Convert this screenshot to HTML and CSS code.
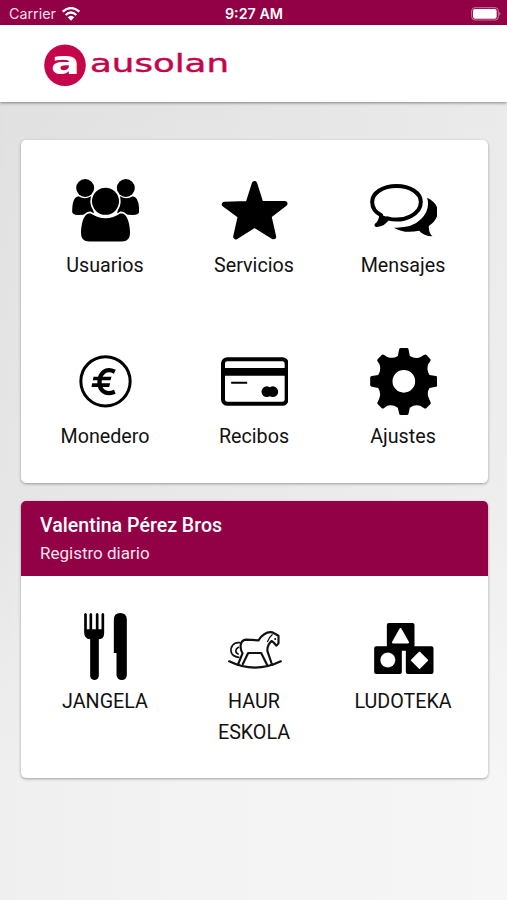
FILE: index.html
```html
<!DOCTYPE html>
<html lang="es">
<head>
<meta charset="utf-8">
<title>Ausolan</title>
<link rel="stylesheet" href="styles.css">
</head>
<body>
<div class="status">
  <div class="carrier"><span>Carrier</span>
    <svg class="wifi" viewBox="0 0 54 42"><g fill="none" stroke="#fff" stroke-width="6.5"><path d="M2 14Q27-8 52 14"/><path d="M11 24Q27 9 43 24"/></g><path d="M27 41L17 31Q27 22 37 31Z" fill="#fff"/></svg>
  </div>
  <div class="time">9:27 AM</div>
  <svg class="battery" viewBox="0 0 90 42"><rect x="2" y="2" width="80" height="37" rx="10" fill="none" stroke="#c77ba0" stroke-width="3"/><rect x="6" y="6" width="71" height="29" rx="6" fill="#fff"/><path d="M85 14Q92 20 85 27Z" fill="#c77ba0"/></svg>
</div>
<header class="header">
  <svg class="logo" viewBox="44 44 186 44">
    <circle cx="65" cy="65.300" r="20.800" fill="#c4054b"/>
    <text class="mark" x="51" y="74.300" textLength="29" lengthAdjust="spacingAndGlyphs">a</text>
    <text class="word" x="90" y="72.300" textLength="139" lengthAdjust="spacingAndGlyphs">ausolan</text>
  </svg>
</header>
<main>
  <section class="card menu">
    <a class="item">
      <svg class="icon" viewBox="61.5 33 204 204"><circle cx="104" cy="69" r="27"/><circle cx="226" cy="69" r="27"/><path d="M65 140Q65 96 84 94Q104 106 121 94L130 145Q112 149 82 150Q65 149 65 140ZM266 140Q266 96 247 94Q227 106 209 94L200 145Q218 149 248 150Q266 149 266 140Z"/><path stroke="#fff" stroke-width="5" d="M120 142Q165 173 210 142Q237 142 241 198Q243 232 213 232H117Q87 232 89 198Q93 142 120 142Z"/><circle cx="165" cy="109" r="43" stroke="#fff" stroke-width="5"/></svg>
      <span>Usuarios</span></a>
    <a class="item">
      <svg class="icon" viewBox="58.500 33 204 204"><path stroke="#000" stroke-width="16" stroke-linejoin="round" d="M162 56L181 116H253L205 153L219 215L162 180L106 215L120 153L72 118L143 116Z"/></svg>
      <span>Servicios</span></a>
    <a class="item">
      <svg class="icon" viewBox="55.500 33 204 204"><path fill="none" stroke="#000" stroke-width="12" stroke-linejoin="round" d="M138 63C98 63 65 83 65 111C65 127 75 142 92 151Q91 170 78 180Q101 178 111 160C164 174 211 145 211 111C211 83 178 63 138 63Z"/><path d="M75 184Q92 172 92 150L113 157Q102 182 75 184Z"/><path d="M230 98C270 116 273 158 235 183Q234 204 246 214Q219 213 206 197Q161 207 130 188Q185 190 211 163Q240 135 230 98Z"/></svg>
      <span>Mensajes</span></a>
    <a class="item">
      <svg class="icon" viewBox="61.500 36 204 204"><circle cx="165" cy="139" r="74" fill="none" stroke="#000" stroke-width="9"/><path fill="none" stroke="#000" stroke-width="13" d="M193 110C165 97 147 115 147 141C147 167 164 182 193 170"/><path d="M129 125H183L180 136H127ZM125 145H179L176 156H123Z"/></svg>
      <span>Monedero</span></a>
    <a class="item">
      <svg class="icon" viewBox="58.500 36 204 204"><rect x="67.500" y="72.500" width="191" height="134" rx="13" fill="none" stroke="#000" stroke-width="12"/><path d="M64 99H262V122H64ZM92 140H140V146H92Z"/><circle cx="199" cy="170" r="16"/><circle cx="217" cy="170" r="16"/></svg>
      <span>Recibos</span></a>
    <a class="item">
      <svg class="icon" viewBox="55.500 36 204 204"><path fill-rule="evenodd" d="M146 43Q147 39 151 39H169Q174 39 174 43L178 63Q196 74 212 65L220 60Q225 57 229 61L239 72Q242 75 239 79L233 88Q227 105 237 120L256 123Q261 124 261 128V150Q261 154 256 155L237 159Q227 175 236 192L240 201Q242 206 239 208L228 219Q224 222 220 219L209 212Q192 208 178 218L174 236Q173 240 169 240H151Q147 240 146 236L142 218Q127 208 110 212L101 219Q97 222 93 219L82 208Q79 205 82 200L86 191Q93 175 83 159L64 155Q59 154 59 150V128Q59 124 64 123L83 120Q93 105 87 88L81 79Q79 75 82 72L93 61Q97 57 101 60L109 65Q127 73 142 63ZM160 105A34 34 0 1 0 160 173A34 34 0 1 0 160 105Z"/></svg>
      <span>Ajustes</span></a>
  </section>
  <section class="card diary">
    <div class="title"><h2>Valentina Pérez Bros</h2><p>Registro diario</p></div>
    <div class="menu">
      <a class="item">
        <svg class="icon" viewBox="61.500 36 204 204"><path d="M101 43Q105 35 109 43V88H117V43Q121 35 125 43V88H136V43Q140 35 144 43V88H153V43Q157 35 161 43V96Q162 117 145 118V228Q143 240 131 240Q120 239 119 228V118Q101 116 101 98ZM190 159V58Q191 39 209 39Q228 39 229 58V225Q228 240 214 240Q200 240 198 226V159Z"/></svg>
        <span>JANGELA</span></a>
      <a class="item">
        <svg class="icon" viewBox="508.500 36 204 204"><g fill="none" stroke="#111" stroke-width="6.500" stroke-linecap="round" stroke-linejoin="round"><path d="M536 184Q613 222 691 184"/><path d="M562 195L576 160C568 146 566 121 587 119L624 121C634 106 646 94 665 97L684 107V130L678 137L670 128L663 123C654 132 649 142 651 154L665 195M577 192L593 159H632L650 195"/><path stroke-width="5" d="M568 128C548 125 539 143 542 156C544 166 551 170 565 172M564 142C554 147 553 158 563 162"/><path stroke-width="4" d="M665 104Q655 112 651 125"/></g><circle cx="674" cy="117" r="3"/></svg>
        <span>HAUR ESKOLA</span></a>
      <a class="item">
        <svg class="icon" viewBox="85.500 36 204 204"><path d="M145 69H216Q222 69 222 75V139H273Q279 139 279 145V216Q279 222 273 222H202Q196 222 196 216V152H184V216Q184 222 178 222H107Q101 222 101 216V145Q101 139 107 139H139V75Q139 69 145 69Z"/><g fill="#fff" stroke="#fff" stroke-linejoin="round"><path stroke-width="7" d="M180 88L202 127H158Z"/><circle cx="142" cy="180" r="22"/><path stroke-width="4" d="M237 157L261 181L237 205L213 181Z"/></g></svg>
        <span>LUDOTEKA</span></a>
    </div>
  </section>
</main>
</body>
</html>
```
FILE: styles.css
```css
* { box-sizing: border-box; }
body {
  margin: 0;
  min-height: 900px;
  font-family: Roboto, sans-serif;
  color: #111;
  background:
    linear-gradient(90deg, rgba(0,0,0,.015), transparent 40%, rgba(255,255,255,.25)),
    linear-gradient(#e4e4e4 100px, #e9e9e9 500px, #f3f3f3 780px, #f3f3f3 900px);
}
.status {
  display: grid;
  grid-template-columns: 1fr auto 1fr;
  align-items: center;
  height: 25px;
  padding: 2px 6px 0 9px;
  background: #920045;
  color: #fff;
  font-family: Inter, sans-serif;
  font-size: 14.300px;
}
.carrier { display: flex; align-items: center; gap: 6px; color: #f5dfea; }
.wifi { width: 18px; height: 14px; }
.time { font-weight: 600; font-size: 14.300px; margin-right: 2px; }
.battery { width: 30px; height: 14px; justify-self: end; }
.header {
  height: 77px;
  padding: 19px 0 0 44px;
  background: #fff;
  box-shadow: 0 1px 3px rgba(0,0,0,.45);
}
.logo { display: block; width: 186px; height: 44px; }
.mark { font: bold 32px "DejaVu Sans", sans-serif; fill: #fff; }
.word {
  font: 24px "DejaVu Sans", sans-serif;
  fill: #c4054b;
  stroke: #c4054b;
  stroke-width: .4px;
}
main {
  display: flex;
  flex-direction: column;
  gap: 18px;
  padding: 38px 19.500px 0 20.500px;
}
.card {
  overflow: hidden;
  border-radius: 5px;
  background: #fff;
  box-shadow: 0 1px 3px rgba(0,0,0,.35);
}
.menu {
  display: grid;
  grid-template-columns: repeat(3, 149px);
  justify-content: center;
}
.card.menu { height: 343px; padding-top: 36px; grid-auto-rows: 171px; }
.item { display: flex; flex-direction: column; align-items: center; }
.icon { width: 68px; height: 68px; margin-bottom: 7px; }
.item span {
  max-width: 110px;
  text-align: center;
  font-size: 19.700px;
  line-height: 30.500px;
}
.diary { height: 277px; }
.title { height: 75px; padding: 13px 19.500px 0; background: #920045; color: #fff; }
.title h2 { margin: 0; font-size: 19.600px; font-weight: 500; line-height: 24px; }
.title p { margin: 4px 0 0; font-size: 17px; line-height: 22px; color: #f7e3ed; }
.diary .menu { padding-top: 36px; }
```
